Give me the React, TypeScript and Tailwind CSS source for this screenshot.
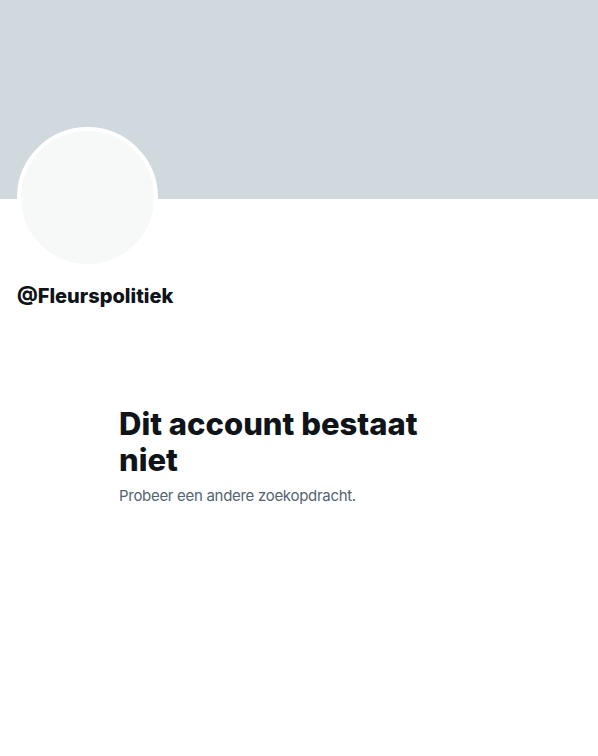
export default function App() {
  return (
    <div className="w-[598px] min-h-[756px] bg-white font-['Inter',sans-serif]">
      <div className="h-[199px] bg-[#CFD9DE]"></div>

      <div className="px-[17px]">
        <div className="-mt-[72px] w-[141px] h-[141px] rounded-full border-4 border-white bg-[#F7F9F9]"></div>
        <div className="mt-4 text-[20px] leading-6 font-extrabold text-[#0F1419]">
          @Fleurspolitiek
        </div>
      </div>

      <div className="mx-auto mt-[98px] w-[400px] px-5">
        <h1 className="text-[31px] leading-9 font-extrabold text-[#0F1419]">
          Dit account bestaat niet
        </h1>
        <p className="mt-2 text-[15px] leading-5 tracking-[-0.3px] text-[#536471]">
          Probeer een andere zoekopdracht.
        </p>
      </div>
    </div>
  );
}
